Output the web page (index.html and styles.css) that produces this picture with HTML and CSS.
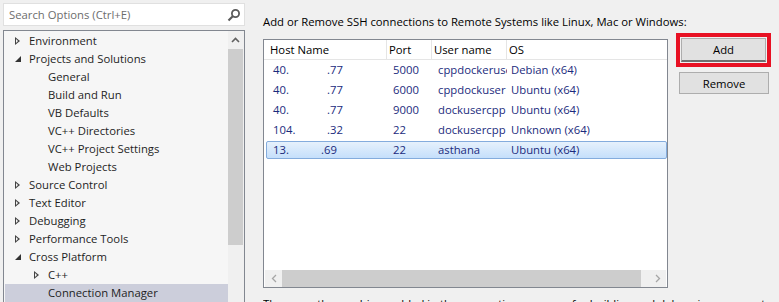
FILE: index.html
```html
<!DOCTYPE html>
<html lang="en">
<head>
  <meta charset="UTF-8" />
  <title>Options - Connection Manager</title>
  <link rel="stylesheet" href="styles.css">
</head>
<body>
  <div class="page">

    <div class="nav">
      <div class="search">
        <span>Search Options (Ctrl+E)</span>
        <svg class="search-icon" width="14" height="14" viewBox="0 0 14 14">
          <circle cx="8.5" cy="5.5" r="3.6" fill="none" stroke="#5a5a5a" stroke-width="1.8"/>
          <line x1="6" y1="8" x2="1.5" y2="12.5" stroke="#5a5a5a" stroke-width="2.2"/>
        </svg>
      </div>

      <div class="tree">
        <ul class="tree-list">
          <li class="node l1"><span class="twisty closed"></span>Environment</li>
          <li class="node l1"><span class="twisty open"></span>Projects and Solutions</li>
          <li class="node l2"><span class="twisty"></span>General</li>
          <li class="node l2"><span class="twisty"></span>Build and Run</li>
          <li class="node l2"><span class="twisty"></span>VB Defaults</li>
          <li class="node l2"><span class="twisty"></span>VC++ Directories</li>
          <li class="node l2"><span class="twisty"></span>VC++ Project Settings</li>
          <li class="node l2"><span class="twisty"></span>Web Projects</li>
          <li class="node l1"><span class="twisty closed"></span>Source Control</li>
          <li class="node l1"><span class="twisty closed"></span>Text Editor</li>
          <li class="node l1"><span class="twisty closed"></span>Debugging</li>
          <li class="node l1"><span class="twisty closed"></span>Performance Tools</li>
          <li class="node l1"><span class="twisty open"></span>Cross Platform</li>
          <li class="node l2"><span class="twisty closed"></span>C++</li>
          <li class="node l2 selected"><span class="twisty"></span>Connection Manager</li>
        </ul>
        <div class="vscroll">
          <div class="vs-arrow">
            <svg width="9" height="6" viewBox="0 0 9 6"><polyline points="1,5 4.5,1.5 8,5" fill="none" stroke="#606060" stroke-width="1.6"/></svg>
          </div>
          <div class="vs-thumb"></div>
        </div>
      </div>
    </div>

    <div class="main">
      <p class="intro">Add or Remove SSH connections to Remote Systems like Linux, Mac or Windows:</p>

      <div class="content">
        <div class="list">
          <div class="list-head">
            <div class="col first">Host Name</div>
            <div class="col">Port</div>
            <div class="col">User name</div>
            <div class="col">OS</div>
          </div>
          <div class="list-body">
            <div class="row">
              <div class="cell first"><span class="oct">40.</span>.77</div>
              <div class="cell">5000</div>
              <div class="cell">cppdockeruser</div>
              <div class="cell last">Debian (x64)</div>
            </div>
            <div class="row">
              <div class="cell first"><span class="oct">40.</span>.77</div>
              <div class="cell">6000</div>
              <div class="cell">cppdockuser</div>
              <div class="cell last">Ubuntu (x64)</div>
            </div>
            <div class="row">
              <div class="cell first"><span class="oct">40.</span>.77</div>
              <div class="cell">9000</div>
              <div class="cell">dockusercpp</div>
              <div class="cell last">Ubuntu (x64)</div>
            </div>
            <div class="row">
              <div class="cell first"><span class="oct">104.</span>.32</div>
              <div class="cell">22</div>
              <div class="cell">dockusercpp</div>
              <div class="cell last">Unknown (x64)</div>
            </div>
            <div class="row selected">
              <div class="cell first"><span class="oct short">13.</span>.69</div>
              <div class="cell">22</div>
              <div class="cell">asthana</div>
              <div class="cell last">Ubuntu (x64)</div>
            </div>
          </div>
          <div class="hscroll">
            <div class="hs-arrow">
              <svg width="6" height="9" viewBox="0 0 6 9"><polyline points="5,1 1.5,4.5 5,8" fill="none" stroke="#a6a6a6" stroke-width="1.3"/></svg>
            </div>
            <div class="hs-thumb"></div>
            <div class="hs-gap"></div>
            <div class="hs-arrow">
              <svg width="6" height="9" viewBox="0 0 6 9"><polyline points="1,1 4.5,4.5 1,8" fill="none" stroke="#a6a6a6" stroke-width="1.3"/></svg>
            </div>
          </div>
        </div>

        <div class="buttons">
          <div class="highlight">
            <button class="btn add">Add</button>
          </div>
          <button class="btn remove">Remove</button>
        </div>
      </div>

      <p class="note">These are the machines added in the connection manager for building and debugging on remote systems.</p>
    </div>

  </div>
</body>
</html>
```

FILE: styles.css
```css
* {
  box-sizing: border-box;
  margin: 0;
  padding: 0;
}

html, body {
  height: 302px;
  overflow: hidden;
}

body {
  font-family: 'Open Sans', 'Noto Sans', sans-serif;
  font-size: 11.3px;
  color: #1e1e1e;
  background: #f0f0f0;
}

.page {
  display: flex;
  padding: 3px 0 0 3px;
}

/* left: search + tree */

.nav {
  width: 242px;
  flex: 0 0 auto;
}

.search {
  height: 23px;
  display: flex;
  align-items: center;
  justify-content: space-between;
  padding: 0 3px 0 5px;
  background: #fff;
  border: 1px solid #e0e0e0;
  color: #6d6d6d;
}

.search-icon {
  display: block;
}

.tree {
  margin-top: 4px;
  height: 290px;
  display: flex;
  background: #f6f6f6;
  border: 1px solid #828790;
}

.tree-list {
  flex: 1;
  list-style: none;
  padding: 1px 0 0 1px;
}

.node {
  height: 18px;
  line-height: 18px;
  display: flex;
  align-items: center;
  white-space: nowrap;
}

.node.l1 {
  padding-left: 9px;
}

.node.l2 {
  padding-left: 28px;
}

.node.selected {
  background: #cccedb;
}

.twisty {
  width: 15px;
  height: 18px;
  flex: 0 0 auto;
  position: relative;
}

.twisty.closed::before {
  content: "";
  position: absolute;
  left: 1px;
  top: 5px;
  border-style: solid;
  border-width: 4px 0 4px 5px;
  border-color: transparent transparent transparent #444;
}

.twisty.closed::after {
  content: "";
  position: absolute;
  left: 2px;
  top: 7px;
  border-style: solid;
  border-width: 2px 0 2px 2.5px;
  border-color: transparent transparent transparent #f6f6f6;
}

.twisty.open::before {
  content: "";
  position: absolute;
  left: 1px;
  top: 6px;
  border-style: solid;
  border-width: 0 0 6px 6px;
  border-color: transparent transparent #333 transparent;
}

.vscroll {
  width: 16px;
  flex: 0 0 auto;
  background: #f0f0f0;
  border-right: 1px solid #f0f0f0;
}

.vs-arrow {
  height: 18px;
  display: flex;
  align-items: center;
  justify-content: center;
}

.vs-thumb {
  width: 15px;
  height: 196px;
  background: #cdcdcd;
}

/* right: connection list */

.main {
  margin-left: 18px;
  flex: 1;
  min-width: 0;
}

.intro {
  margin-top: 11px;
  line-height: 16px;
  margin-bottom: 3px;
  color: #000;
  white-space: nowrap;
}

.content {
  display: flex;
  align-items: flex-start;
  gap: 8px;
}

.list {
  width: 405px;
  height: 249px;
  margin-top: 6px;
  display: flex;
  flex-direction: column;
  background: #fff;
  border: 1px solid #828790;
}

.list-head {
  height: 20px;
  display: grid;
  grid-template-columns: 123px 45px 75px 1fr;
  border-bottom: 1px solid #e5e5e5;
  color: #000;
}

.list-head .col {
  line-height: 19px;
  padding-left: 2px;
  border-right: 1px solid #e5e5e5;
  white-space: nowrap;
  overflow: hidden;
}

.list-head .col.first {
  padding-left: 6px;
}

.list-head .col:last-child {
  border-right: none;
}

.list-body {
  flex: 1;
  display: flex;
  flex-direction: column;
}

.row {
  height: 18px;
  margin: 1px 0 1px 2px;
  display: grid;
  grid-template-columns: 120px 45px 75px 1fr;
  border: 1px solid transparent;
  border-radius: 2px;
  color: #1b2b7d;
  line-height: 16px;
}

.row.selected {
  border-color: #84acdd;
  background: linear-gradient(#e6f1fc, #c5dffb);
}

.cell {
  padding-left: 6px;
  white-space: nowrap;
  overflow: hidden;
}

.cell.last {
  padding-left: 4px;
}

.oct {
  display: inline-block;
  width: 54px;
}

.oct.short {
  width: 48px;
}

.hscroll {
  height: 17px;
  margin: 0 1px;
  display: flex;
  background: #f0f0f0;
}

.hs-arrow {
  width: 17px;
  display: flex;
  align-items: center;
  justify-content: center;
}

.hs-thumb {
  width: 359px;
  background: #cdcdcd;
}

.hs-gap {
  flex: 1;
}

.note {
  margin-top: 8px;
  line-height: 16px;
  color: #000;
  white-space: nowrap;
  overflow: hidden;
}

/* buttons */

.buttons {
  display: flex;
  flex-direction: column;
  align-items: flex-start;
}

.highlight {
  border: 4px solid #e81123;
  padding: 1px;
}

.btn {
  font-family: inherit;
  font-size: 11.3px;
  color: #000;
  background: #e1e1e1;
  border: 1px solid #adadad;
}

.btn.add {
  width: 85px;
  height: 24px;
  border-bottom: 2px solid #6f6f6f;
}

.btn.remove {
  margin: 5px 0 0 3px;
  width: 90px;
  height: 22px;
}
```
